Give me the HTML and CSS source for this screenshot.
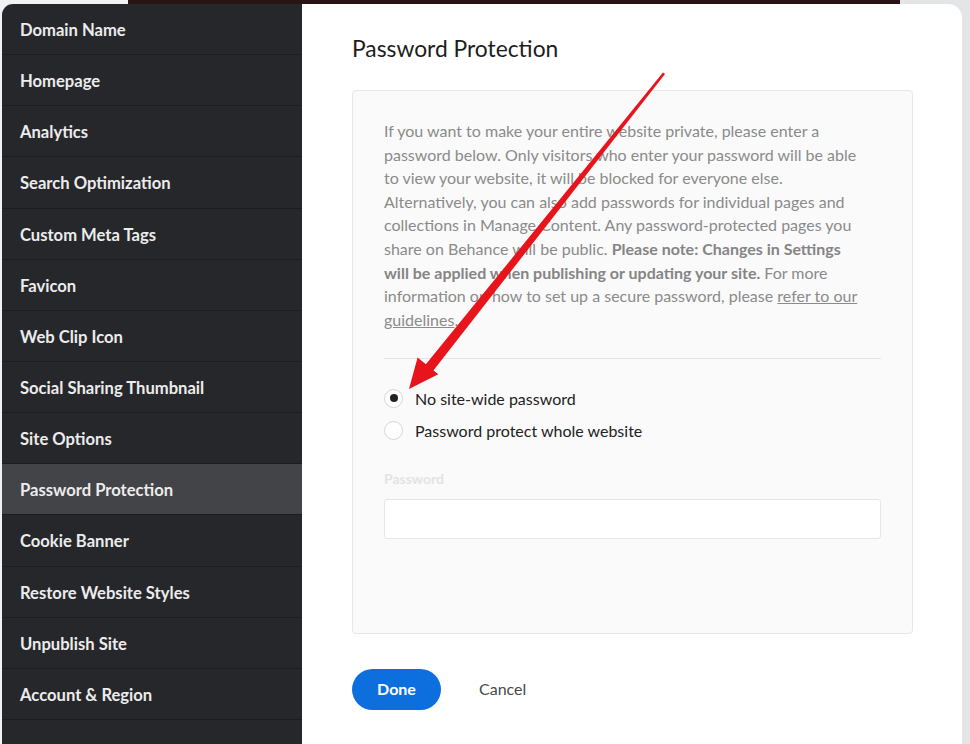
FILE: index.html
```html
<!DOCTYPE html>
<html>
<head>
<meta charset="utf-8">
<link rel="stylesheet" href="styles.css">
</head>
<body>
<div class="dialog">
  <nav class="sidebar">
    <div class="nav-item">Domain Name</div>
    <div class="nav-item">Homepage</div>
    <div class="nav-item">Analytics</div>
    <div class="nav-item">Search Optimization</div>
    <div class="nav-item">Custom Meta Tags</div>
    <div class="nav-item">Favicon</div>
    <div class="nav-item">Web Clip Icon</div>
    <div class="nav-item">Social Sharing Thumbnail</div>
    <div class="nav-item">Site Options</div>
    <div class="nav-item active">Password Protection</div>
    <div class="nav-item">Cookie Banner</div>
    <div class="nav-item">Restore Website Styles</div>
    <div class="nav-item">Unpublish Site</div>
    <div class="nav-item">Account &amp; Region</div>
  </nav>
  <main class="content">
    <h1 class="title">Password Protection</h1>
    <section class="box">
      <p class="desc">If you want to make your entire website private, please enter a<br>password below. Only visitors who enter your password will be able<br>to view your website, it will be blocked for everyone else.<br>Alternatively, you can also add passwords for individual pages and<br>collections in Manage Content. Any password-protected pages you<br>share on Behance will be public. <b>Please note: Changes in Settings<br>will be applied when publishing or updating your site.</b> For more<br>information on how to set up a secure password, please <a class="link">refer to our<br>guidelines</a>.</p>
      <hr class="divider">
      <div class="radios">
        <label class="radio-row"><span class="radio checked"></span>No site-wide password</label>
        <label class="radio-row"><span class="radio"></span>Password protect whole website</label>
      </div>
      <div class="field-label">Password</div>
      <div class="input"></div>
    </section>
    <div class="actions">
      <button class="btn-done">Done</button>
      <button class="btn-cancel">Cancel</button>
    </div>
  </main>
</div>
<svg class="arrow" width="970" height="744" viewBox="0 0 970 744">
  <polygon fill="#e8141b" points="665,74 663,72.4 424,366.5 431.8,372.6"/>
  <polygon fill="#e8141b" points="409,389 417.6,357.6 428,366 438.3,374.2"/>
</svg>
</body>
</html>
```
FILE: styles.css
```css
* { box-sizing: border-box; }
html, body { margin: 0; padding: 0; }
body {
  width: 970px;
  height: 744px;
  overflow: hidden;
  position: relative;
  background:
    linear-gradient(#2a1315, #2a1315) 128px 0 / 772px 4px no-repeat,
    linear-gradient(90deg, #f2f2f2 0, #f2f2f2 900px, #e3e5e6 900px) 0 0 / 100% 100% no-repeat;
  font-family: Lato, "Open Sans", sans-serif;
}
.dialog {
  display: flex;
  margin: 4px 0 0 2px;
  width: 960px;
  height: 740px;
}
.sidebar {
  width: 300px;
  background: #26272b;
  border-top-left-radius: 11px;
  overflow: hidden;
}
.nav-item {
  height: 51.15px;
  border-bottom: 1px solid #1c1d20;
  padding-left: 18px;
  padding-top: 2px;
  display: flex;
  align-items: center;
  color: #ececec;
  font-weight: 700;
  font-size: 16.6px;
}
.nav-item.active { background: #434447; }
.content {
  flex: 1;
  background: #fff;
  border-top-right-radius: 14px;
  padding: 30px 49px 0 50px;
}
.title {
  margin: 0 0 28px;
  font-size: 22.8px;
  line-height: 28px;
  font-weight: 400;
  color: #1d1d1d;
}
.box {
  height: 544px;
  background: #fafafa;
  border: 1px solid #e6e6e6;
  border-radius: 4px;
  padding: 28px 31px 0 31px;
}
.desc {
  margin: 0;
  font-size: 16px;
  line-height: 23.6px;
  color: #8b8b8b;
}
.desc b { font-weight: 700; color: #858585; }
.link { text-decoration: underline; color: #8b8b8b; }
.divider {
  border: 0;
  border-top: 1px solid #e4e4e4;
  margin: 27px 0 0;
}
.radios {
  display: flex;
  flex-direction: column;
  gap: 12px;
  margin-top: 29px;
}
.radio-row {
  display: flex;
  align-items: center;
  gap: 12px;
  height: 20px;
  font-size: 16px;
  color: #222;
}
.radio {
  width: 19px;
  height: 19px;
  border: 1px solid #d6d6d6;
  border-radius: 50%;
  background: #fff;
  display: flex;
  align-items: center;
  justify-content: center;
}
.radio.checked::after {
  content: "";
  width: 8px;
  height: 8px;
  border-radius: 50%;
  background: #222;
}
.field-label {
  margin-top: 30px;
  font-size: 14px;
  font-weight: 700;
  color: #e3e3e3;
  line-height: 18px;
}
.input {
  margin-top: 11px;
  height: 40px;
  background: #fff;
  border: 1px solid #e6e6e6;
  border-radius: 3px;
}
.actions {
  display: flex;
  align-items: center;
  gap: 38px;
  margin-top: 35px;
}
.btn-done {
  width: 89px;
  height: 41px;
  border: 0;
  border-radius: 21px;
  background: #0d6fdd;
  color: #fff;
  font-family: inherit;
  font-weight: 700;
  font-size: 16px;
  padding: 0 0 2px;
}
.btn-cancel {
  border: 0;
  background: none;
  padding: 0 0 3px;
  font-family: inherit;
  font-size: 16px;
  color: #4a4a4a;
}
.arrow {
  position: absolute;
  left: 0;
  top: 0;
  pointer-events: none;
}
```
